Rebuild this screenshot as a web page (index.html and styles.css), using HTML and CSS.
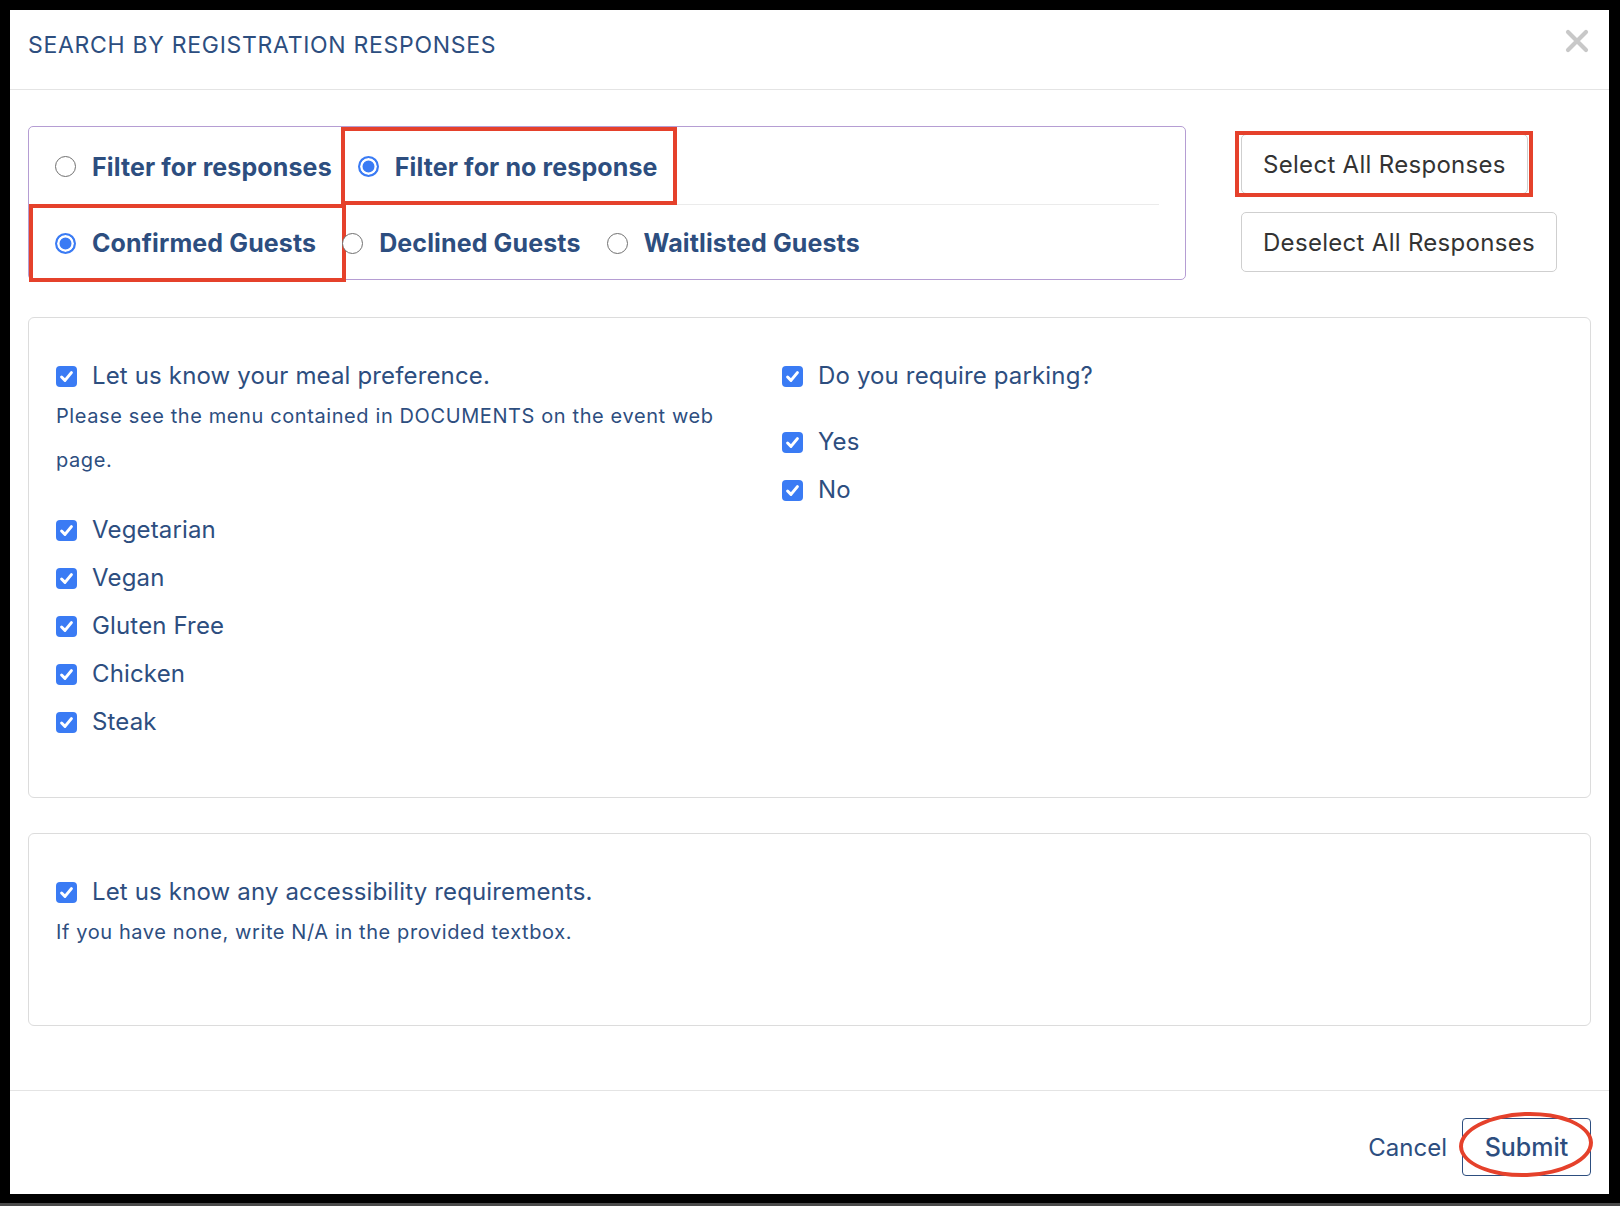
FILE: index.html
```html
<!DOCTYPE html>
<html>
<head>
<meta charset="utf-8">
<title>Search by registration responses</title>
<link rel="stylesheet" href="styles.css">
</head>
<body>
<div class="screen">
  <div class="modal">
    <div class="modal-header">
      <h1 class="modal-title">SEARCH BY REGISTRATION RESPONSES</h1>
      <button class="close-btn" aria-label="Close">
        <svg width="24" height="24" viewBox="0 0 24 24"><path d="M3 3 L21 21 M21 3 L3 21" stroke="#c8c8c8" stroke-width="4.2" stroke-linecap="round" fill="none"/></svg>
      </button>
    </div>

    <div class="modal-body">
      <div class="top-section">
        <div class="filter-box">
          <div class="filter-row filter-row-first">
            <label class="radio-item"><span class="radio"></span><span class="radio-label">Filter for responses</span></label>
            <label class="radio-item annot annot-one"><span class="radio radio-checked"></span><span class="radio-label">Filter for no response</span></label>
          </div>
          <div class="filter-row">
            <label class="radio-item annot annot-two"><span class="radio radio-checked"></span><span class="radio-label">Confirmed Guests</span></label>
            <label class="radio-item"><span class="radio"></span><span class="radio-label">Declined Guests</span></label>
            <label class="radio-item"><span class="radio"></span><span class="radio-label">Waitlisted Guests</span></label>
          </div>
        </div>
        <div class="bulk-actions">
          <div class="btn-wrap annot-select"><button class="btn-outline">Select All Responses</button></div>
          <button class="btn-outline">Deselect All Responses</button>
        </div>
      </div>

      <div class="card">
        <div class="question-grid">
          <div class="question">
            <div class="check-row question-label"><span class="checkbox"><svg width="21" height="21" viewBox="0 0 21 21"><path d="M5.6 11 L9 14.4 L15.4 6.6" stroke="#fff" stroke-width="3" stroke-linecap="round" stroke-linejoin="round" fill="none"/></svg></span><span>Let us know your meal preference.</span></div>
            <p class="help-text">Please see the menu contained in DOCUMENTS on the event web page.</p>
            <div class="options">
              <div class="check-row"><span class="checkbox"><svg width="21" height="21" viewBox="0 0 21 21"><path d="M5.6 11 L9 14.4 L15.4 6.6" stroke="#fff" stroke-width="3" stroke-linecap="round" stroke-linejoin="round" fill="none"/></svg></span><span>Vegetarian</span></div>
              <div class="check-row"><span class="checkbox"><svg width="21" height="21" viewBox="0 0 21 21"><path d="M5.6 11 L9 14.4 L15.4 6.6" stroke="#fff" stroke-width="3" stroke-linecap="round" stroke-linejoin="round" fill="none"/></svg></span><span>Vegan</span></div>
              <div class="check-row"><span class="checkbox"><svg width="21" height="21" viewBox="0 0 21 21"><path d="M5.6 11 L9 14.4 L15.4 6.6" stroke="#fff" stroke-width="3" stroke-linecap="round" stroke-linejoin="round" fill="none"/></svg></span><span>Gluten Free</span></div>
              <div class="check-row"><span class="checkbox"><svg width="21" height="21" viewBox="0 0 21 21"><path d="M5.6 11 L9 14.4 L15.4 6.6" stroke="#fff" stroke-width="3" stroke-linecap="round" stroke-linejoin="round" fill="none"/></svg></span><span>Chicken</span></div>
              <div class="check-row"><span class="checkbox"><svg width="21" height="21" viewBox="0 0 21 21"><path d="M5.6 11 L9 14.4 L15.4 6.6" stroke="#fff" stroke-width="3" stroke-linecap="round" stroke-linejoin="round" fill="none"/></svg></span><span>Steak</span></div>
            </div>
          </div>
          <div class="question">
            <div class="check-row question-label"><span class="checkbox"><svg width="21" height="21" viewBox="0 0 21 21"><path d="M5.6 11 L9 14.4 L15.4 6.6" stroke="#fff" stroke-width="3" stroke-linecap="round" stroke-linejoin="round" fill="none"/></svg></span><span>Do you require parking?</span></div>
            <div class="options">
              <div class="check-row"><span class="checkbox"><svg width="21" height="21" viewBox="0 0 21 21"><path d="M5.6 11 L9 14.4 L15.4 6.6" stroke="#fff" stroke-width="3" stroke-linecap="round" stroke-linejoin="round" fill="none"/></svg></span><span>Yes</span></div>
              <div class="check-row"><span class="checkbox"><svg width="21" height="21" viewBox="0 0 21 21"><path d="M5.6 11 L9 14.4 L15.4 6.6" stroke="#fff" stroke-width="3" stroke-linecap="round" stroke-linejoin="round" fill="none"/></svg></span><span>No</span></div>
            </div>
          </div>
        </div>
      </div>

      <div class="card card-short">
        <div class="question">
          <div class="check-row question-label"><span class="checkbox"><svg width="21" height="21" viewBox="0 0 21 21"><path d="M5.6 11 L9 14.4 L15.4 6.6" stroke="#fff" stroke-width="3" stroke-linecap="round" stroke-linejoin="round" fill="none"/></svg></span><span>Let us know any accessibility requirements.</span></div>
          <p class="help-text">If you have none, write N/A in the provided textbox.</p>
        </div>
      </div>
    </div>

    <div class="modal-footer">
      <button class="btn-link">Cancel</button>
      <div class="btn-wrap annot-submit"><button class="btn-primary-outline">Submit</button></div>
    </div>
  </div>
</div>
</body>
</html>
```
FILE: styles.css
```css
*, *::before, *::after { box-sizing: border-box; }

html, body {
  margin: 0;
  padding: 0;
  background: #000;
}

body {
  font-family: "Inter", "Noto Sans", "Liberation Sans", sans-serif;
  color: #2d4e7f;
}

.screen {
  width: 1620px;
  height: 1206px;
  background: #000;
  padding: 10px 11px 12px 10px;
  box-shadow: inset 0 -3px 0 #4a4a4a;
}

.modal {
  background: #fff;
  height: 1184px;
  display: flex;
  flex-direction: column;
}

/* Header */
.modal-header {
  height: 80px;
  border-bottom: 1px solid #e4e4e4;
  display: flex;
  justify-content: space-between;
  align-items: flex-start;
  padding: 19px 20px 0 18px;
}

.modal-title {
  margin: 3px 0 0 0;
  font-size: 23px;
  line-height: 26px;
  font-weight: 400;
  color: #2d4e7f;
  letter-spacing: 0.7px;
}

.close-btn {
  border: 0;
  background: none;
  padding: 0;
  width: 24px;
  height: 24px;
  display: block;
}

.close-btn svg { display: block; }

/* Body */
.modal-body {
  flex: 1;
  padding: 36px 18px 0 18px;
}

.top-section {
  display: flex;
  align-items: flex-start;
}

.filter-box {
  position: relative;
  width: 1158px;
  border: 1px solid #b59dd3;
  border-radius: 5px;
  padding: 0 26px;
}

.filter-row {
  display: flex;
  align-items: stretch;
  gap: 26px;
  height: 74px;
}

.filter-row-first {
  height: 78px;
  border-bottom: 1px solid #ebebeb;
}

.radio-item {
  position: relative;
  display: flex;
  align-items: center;
  gap: 16px;
  font-size: 25px;
  font-weight: 700;
  letter-spacing: 0.12px;
  color: #2d4e7f;
  padding-top: 2px;
}

.radio {
  width: 21px;
  height: 21px;
  border-radius: 50%;
  border: 1.5px solid #707070;
  background: #fff;
  flex: none;
}

.radio-checked {
  border: 2px solid #3a7bf4;
  background: #3a7bf4;
  box-shadow: inset 0 0 0 2.5px #fff;
}

/* Red annotations drawn over the screenshot */
.annot::after,
.btn-wrap::after {
  content: "";
  position: absolute;
  pointer-events: none;
  border: 4px solid #e5412b;
}

.annot-one::after {
  left: -17px;
  right: -19px;
  top: 0;
  bottom: -1px;
}

.annot-two::after {
  left: -26px;
  right: -30px;
  top: -1px;
  bottom: -3px;
}

.btn-wrap {
  position: relative;
}

.annot-select::after {
  left: -6px;
  right: -5px;
  top: -3px;
  bottom: -3px;
}

.annot-submit::after {
  left: -3px;
  top: -6px;
  width: 134px;
  height: 65px;
  border-radius: 50%;
  transform: rotate(-2deg);
}

.bulk-actions {
  margin-left: 55px;
  padding-top: 8px;
  display: flex;
  flex-direction: column;
  align-items: flex-start;
  gap: 18px;
}

.btn-outline {
  height: 60px;
  padding: 0 21px;
  border: 1px solid #cfcfcf;
  border-radius: 5px;
  background: #fff;
  font-family: inherit;
  font-size: 24px;
  font-weight: 400;
  letter-spacing: 0.3px;
  color: #333;
  display: block;
}

/* Cards */
.card {
  margin-top: 37px;
  border: 1px solid #dcdcdc;
  border-radius: 6px;
  padding: 40px 27px 51px 27px;
}

.card-short {
  margin-top: 35px;
  padding-bottom: 71px;
}

.question-grid {
  display: grid;
  grid-template-columns: 690px 1fr;
  column-gap: 36px;
}

.check-row {
  display: flex;
  align-items: center;
  gap: 15px;
  height: 48px;
  font-size: 24px;
  line-height: 36px;
  letter-spacing: 0.15px;
  color: #2d4e7f;
}

.question-label {
  height: 36px;
}

.checkbox {
  width: 21px;
  height: 21px;
  border-radius: 4px;
  background: #3a7bf4;
  flex: none;
  display: block;
}

.checkbox svg { display: block; }

.help-text {
  margin: 0;
  font-size: 20px;
  line-height: 44px;
  color: #2d4e7f;
  letter-spacing: 0.6px;
}

.options {
  margin-top: 24px;
}

/* Footer */
.modal-footer {
  height: 104px;
  border-top: 1px solid #e4e4e4;
  display: flex;
  justify-content: flex-end;
  align-items: flex-start;
  padding: 27px 18px 0 0;
}

.btn-link {
  height: 58px;
  border: 0;
  background: none;
  padding: 0;
  margin-right: 15px;
  font-family: inherit;
  font-size: 24px;
  color: #2d4e7f;
}

.btn-primary-outline {
  display: block;
  width: 129px;
  height: 58px;
  border: 1px solid #2d4e7f;
  border-radius: 4px;
  background: #fff;
  padding: 0;
  font-family: inherit;
  font-size: 25px;
  font-weight: 500;
  color: #2d4e7f;
}
```
